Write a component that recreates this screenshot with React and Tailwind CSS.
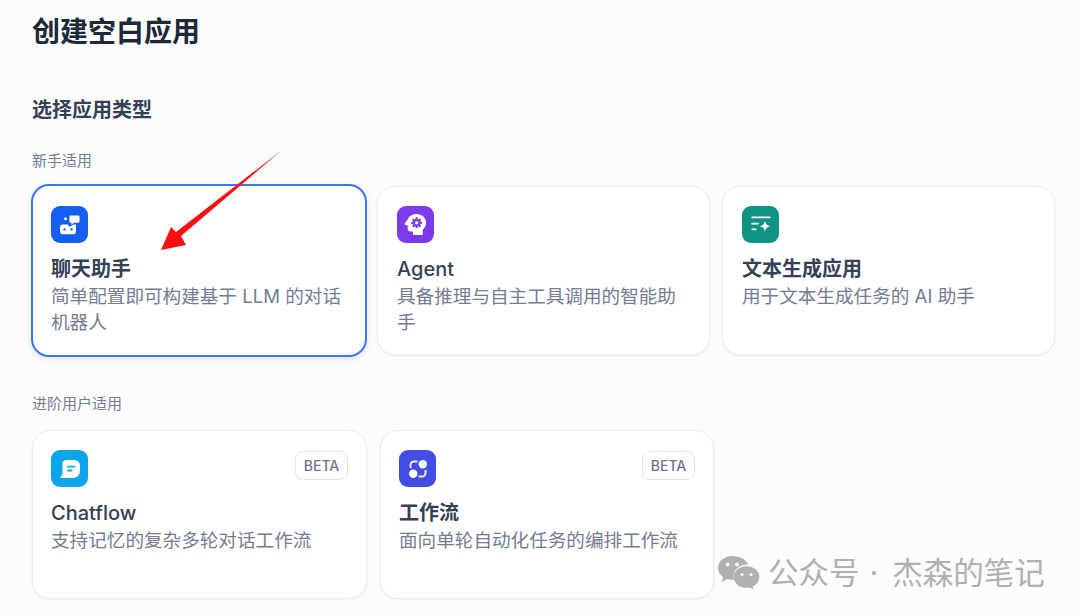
import React from 'react'

const FONT = "font-['Inter','Noto_Sans_CJK_SC',sans-serif]"

function ChatIcon() {
  return (
    <svg width="24" height="24" viewBox="0 0 24 24" fill="white">
      <circle cx="7.500" cy="5.800" r="1.500" />
      <path d="M12.500 2.500h8a1 1 0 0 1 1 1v5.200a1 1 0 0 1-1 1h-4.700L13.500 12v-2.300h-1a1 1 0 0 1-1-1V3.500a1 1 0 0 1 1-1z" />
      <path fillRule="evenodd" d="M5 11.500h5.300v1c0 .9.900 1.400 1.600 1l3.900-2H18v6.700a3 3 0 0 1-3 3H5a3 3 0 0 1-3-3v-3.700a3 3 0 0 1 3-3zM6.500 15.200a1.200 1.200 0 1 0 0 2.400 1.200 1.200 0 0 0 0-2.400zm7 0a1.200 1.200 0 1 0 0 2.400 1.200 1.200 0 0 0 0-2.400z" />
    </svg>
  )
}

function AgentIcon() {
  return (
    <svg width="29" height="29" viewBox="0 0 26 26">
      <path fill="white" d="M14 3.500c4.800 0 8.500 3.500 8.500 8 0 2.800-1.300 4.700-3 6.200v4.800h-8.700v-3.200H8.500a2.500 2.500 0 0 1-2.500-2.500v-2.800l-2.300-.8c-.5-.2-.6-.7-.3-1.100L6 8.300c1.400-3 4.300-4.800 8-4.800z" />
      <g fill="#7c3aed">
        <circle cx="14" cy="11.500" r="3.400" />
        <rect x="13" y="6.600" width="2" height="9.800" rx=".6" />
        <rect x="9.100" y="10.500" width="9.800" height="2" rx=".6" />
        <rect x="13" y="6.600" width="2" height="9.800" rx=".6" transform="rotate(45 14 11.500)" />
        <rect x="13" y="6.600" width="2" height="9.800" rx=".6" transform="rotate(-45 14 11.500)" />
      </g>
      <circle cx="14" cy="11.500" r="1.500" fill="white" />
    </svg>
  )
}

function TextIcon() {
  return (
    <svg width="24" height="24" viewBox="0 0 24 24" fill="white">
      <rect x="2.500" y="3.500" width="19" height="1.800" rx=".4" />
      <rect x="2.500" y="9.800" width="7" height="1.800" rx=".4" />
      <rect x="2.500" y="15.500" width="5" height="1.800" rx=".4" />
      <path d="M16 7.500c.7 3.700 1.900 5 5.500 5.800-3.600.8-4.800 2-5.500 5.700-.7-3.700-1.900-4.900-5.500-5.700 3.600-.8 4.800-2.100 5.500-5.800z" />
    </svg>
  )
}

function FlowIcon() {
  return (
    <svg width="24" height="24" viewBox="0 0 24 24" fill="white">
      <path d="M11.500 3.500v2H8a2.500 2.500 0 0 0-2.500 2.500v3h-2V8A4.500 4.500 0 0 1 8 3.500z" opacity=".9" />
      <circle cx="16.800" cy="7.200" r="4.200" />
      <circle cx="7.200" cy="16.800" r="4.200" />
      <path d="M12.500 20.500v-2H16a2.500 2.500 0 0 0 2.500-2.500v-3h2v3a4.500 4.500 0 0 1-4.500 4.500z" opacity=".9" />
    </svg>
  )
}

function BubbleIcon() {
  return (
    <svg width="26" height="26" viewBox="0 0 26 26">
      <path fill="white" d="M9 4h8.500a5.500 5.500 0 0 1 5.500 5.500v5.500a7 7 0 0 1-7 7H4.200c-.7 0-1-.7-.6-1.200L5 19a3 3 0 0 0 .5-1.700V7.500A3.500 3.500 0 0 1 9 4z" />
      <rect x="10" y="9.800" width="8.500" height="1.800" rx=".9" fill="#0ea5e9" />
      <rect x="10" y="13.600" width="5.500" height="1.800" rx=".9" fill="#0ea5e9" />
    </svg>
  )
}

function Beta() {
  return (
    <span className="mt-[1px] h-[29px] w-[53px] flex items-center justify-center rounded-lg border border-[#e3e5ea] bg-white text-[14px] font-medium text-[#6b7394]">
      BETA
    </span>
  )
}

function Card({ icon, color, title, desc, beta, selected, latin, className }) {
  return (
    <div className={`relative rounded-[18px] bg-white ${selected ? 'border-2 border-[#3b76f6] shadow-[0_2px_6px_rgba(16,24,40,0.1)]' : 'border border-[#eaecf0] shadow-[0_1px_3px_rgba(16,24,40,0.05)]'} ${className}`}>
      <div className="flex items-start justify-between">
        <div className={`w-[37px] h-[37px] rounded-[9px] flex items-center justify-center ${color}`}>{icon}</div>
        {beta && <Beta />}
      </div>
      <div className={`mt-[13px] text-[20px] leading-[26px] text-[#344054] ${latin ? 'font-medium' : 'font-semibold'}`}>{title}</div>
      <div className="mt-[1px] text-[18.600px] leading-[26px] text-[#737c92]">{desc}</div>
    </div>
  )
}

export default function App() {
  return (
    <div className={`relative w-[1080px] h-[616px] overflow-hidden bg-[#fcfcfd] pt-[13px] pl-[31px] ${FONT}`}>
      <h1 className="pl-[1px] text-[28px] leading-[38px] font-semibold text-[#1d2939]">创建空白应用</h1>
      <h2 className="mt-[45px] pl-[1px] text-[20px] leading-[28px] font-semibold text-[#344054]">选择应用类型</h2>
      <p className="mt-[27px] pl-[1px] text-[15px] leading-[20px] text-[#737c92]">新手适用</p>

      <div className="mt-[13px] flex items-center">
        <Card
          selected
          className="w-[336px] h-[173px] pt-[20px] px-[18px]"
          color="bg-[#155eef]"
          icon={<ChatIcon />}
          title="聊天助手"
          desc="简单配置即可构建基于 LLM 的对话机器人"
        />
        <Card
          latin
          className="ml-[10px] w-[333px] h-[169px] pt-[19px] px-[19px]"
          color="bg-[#7c3aed]"
          icon={<AgentIcon />}
          title="Agent"
          desc="具备推理与自主工具调用的智能助手"
        />
        <Card
          className="ml-[12px] w-[333px] h-[169px] pt-[19px] px-[19px]"
          color="bg-[#0e9384]"
          icon={<TextIcon />}
          title="文本生成应用"
          desc="用于文本生成任务的 AI 助手"
        />
      </div>

      <p className="mt-[37px] pl-[1px] text-[15px] leading-[20px] text-[#737c92]">进阶用户适用</p>

      <div className="mt-[16px] ml-[1px] flex gap-[13px]">
        <Card
          beta
          latin
          className="w-[335px] h-[169px] pt-[19px] px-[18px]"
          color="bg-[#0ba5ec]"
          icon={<BubbleIcon />}
          title="Chatflow"
          desc="支持记忆的复杂多轮对话工作流"
        />
        <Card
          beta
          className="w-[334px] h-[169px] pt-[19px] px-[18px]"
          color="bg-[#444ce7]"
          icon={<FlowIcon />}
          title="工作流"
          desc="面向单轮自动化任务的编排工作流"
        />
      </div>

      {/* annotation arrow on top of the card */}
      <svg className="absolute left-[155px] top-[145px]" width="135" height="110" viewBox="0 0 135 110">
        <path fill="#fb0f0f" d="M127 5 L26 91 L31 100 L6 105 L16 82 L21 87 Z" />
      </svg>

      {/* wechat watermark */}
      <div className="absolute left-[717px] top-[554px] flex items-center text-[30.500px] leading-[38px] text-[#b0b0b0]">
        <svg width="44" height="36" viewBox="0 0 44 36" fill="#b0b0b0">
          <path d="M15.500 1C7.500 1 1 6.400 1 13c0 3.700 2 7 5.200 9.200L4.800 27l5.300-2.900c1.700.5 3.500.8 5.400.8.600 0 1 0 1.500-.1-.3-1.100-.5-2.200-.5-3.300 0-6.600 6-11.900 13.700-11.900h1C29.500 4.700 23 1 15.500 1z" />
          <ellipse cx="29.500" cy="22" rx="12.800" ry="10.800" />
          <path d="M35 30l1.500 4.500-5.500-3z" />
          <circle cx="10.500" cy="9.500" r="1.900" fill="#fcfcfd" />
          <circle cx="20" cy="9.500" r="1.900" fill="#fcfcfd" />
          <circle cx="25" cy="19.500" r="1.600" fill="#fcfcfd" />
          <circle cx="34" cy="19.500" r="1.600" fill="#fcfcfd" />
        </svg>
        <span className="ml-[7px]">公众号</span>
        <span className="ml-[10px]">·</span>
        <span className="ml-[14px]">杰森的笔记</span>
      </div>
    </div>
  )
}
